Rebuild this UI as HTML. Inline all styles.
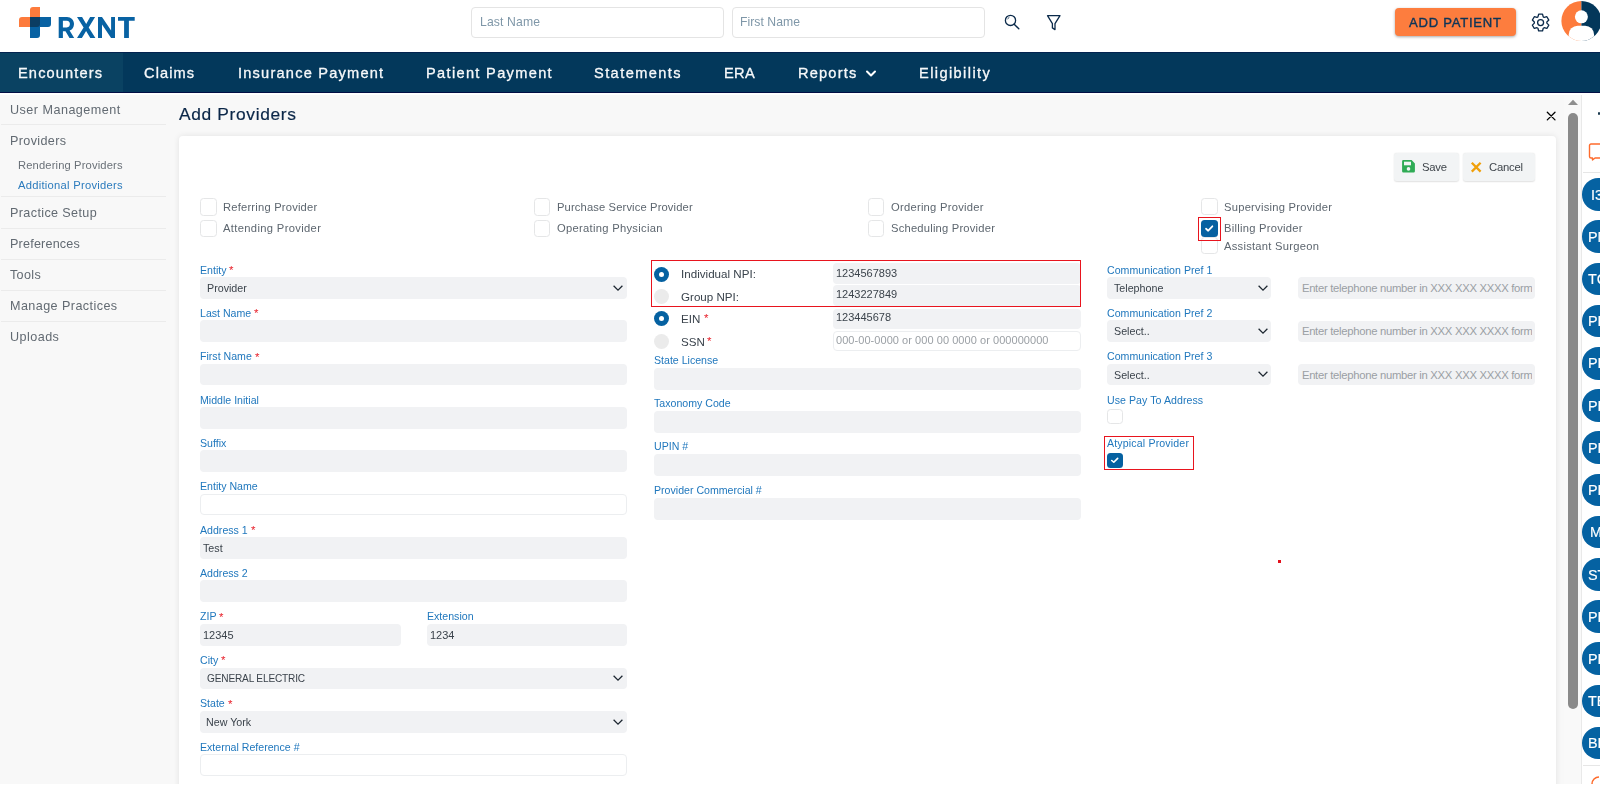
<!DOCTYPE html>
<html><head><meta charset="utf-8"><style>
html,body{margin:0;padding:0;}
body{width:1600px;height:798px;overflow:hidden;position:relative;background:#fff;font-family:"Liberation Sans",sans-serif;}
.a{position:absolute;}
.t{position:absolute;white-space:nowrap;will-change:transform;}
</style></head><body>
<svg class="a" style="left:0;top:0" width="160" height="52" viewBox="0 0 160 52">
<path d="M33 7 H40 V27 H19 V20 a3 3 0 0 1 3-3 H30 V10 a3 3 0 0 1 3-3 Z" fill="#fd7b3c"/>
<path d="M30 17 H51 V24 a3 3 0 0 1 -3 3 H40 V35 a3 3 0 0 1 -3 3 H30 Z" fill="#0862a3"/>
<path d="M30 17 H40 V24 a3 3 0 0 1 -3 3 H30 Z" fill="#0b3d63"/>
<g fill="#0862a3">
<path fill-rule="evenodd" d="M58.7 17 H67 C71 17 74 19.9 74 24 C74 27.3 72.1 29.7 69.6 30.6 L74.2 38 H69.5 L65.5 31.2 H62.9 V38 H58.7 Z M62.9 20.8 H66.8 C68.8 20.8 69.9 22.1 69.9 24.1 C69.9 26.1 68.8 27.4 66.8 27.4 H62.9 Z"/>
<path d="M77 17 H82.1 L86.2 23.9 L90.1 17 H95.1 L88.7 27.5 L95.4 38 H90.3 L86.1 31.1 L81.9 38 H77 L83.6 27.5 Z"/>
<path d="M98 17 H102 L111.1 30.6 V17 H115 V38 H111.1 L102 24.4 V38 H98 Z"/>
<path d="M118 17 H134.7 V20.8 H128.9 V38 H124.1 V20.8 H118 Z"/>
</g>
</svg>
<div class="a" style="left:471px;top:7px;width:253px;height:31px;background:#fff;border:1px solid #e4e4e4;border-radius:4px;box-sizing:border-box;"></div>
<div class="a" style="left:732px;top:7px;width:253px;height:31px;background:#fff;border:1px solid #e4e4e4;border-radius:4px;box-sizing:border-box;"></div>
<div class="t " style="left:479.50px;top:16.20px;font-size:12.20px;line-height:12.20px;color:#7f97a8;letter-spacing:0.126px;">Last Name</div>
<div class="t " style="left:739.80px;top:16.20px;font-size:12.20px;line-height:12.20px;color:#7f97a8;letter-spacing:0.039px;">First Name</div>
<svg class="a" style="left:1000px;top:10px" width="24" height="24" viewBox="0 0 24 24">
<circle cx="10.5" cy="10.4" r="5.1" fill="none" stroke="#0b2a4a" stroke-width="1.3"/>
<path d="M14.2 14.2 L18.8 18.8" stroke="#0b2a4a" stroke-width="1.4" stroke-linecap="round"/>
<path d="M7.8 8.7 L9.1 7.5" stroke="#0b2a4a" stroke-width="0.9" stroke-linecap="round"/>
</svg>
<svg class="a" style="left:1044px;top:12px" width="20" height="20" viewBox="0 0 20 20">
<path d="M3.5 3.7 H16 L11 11.6 V17.6 L8.4 15.9 V11.6 Z" fill="none" stroke="#0b2a4a" stroke-width="1.3" stroke-linejoin="round"/>
</svg>
<div class="a" style="left:1395px;top:8px;width:121px;height:28px;background:#fd7d3e;border-radius:4px;box-shadow:0 1px 3px rgba(0,0,0,.35);"></div>
<div class="t " style="left:1409.00px;top:16.25px;font-size:13.10px;line-height:13.10px;color:#0d3558;letter-spacing:0.733px;-webkit-text-stroke:0.4px #0d3558;">ADD PATIENT</div>
<svg class="a" style="left:1529px;top:10.6px" width="23.2" height="23.2" viewBox="0 0 24 24">
<path fill="none" stroke="#0b2a4a" stroke-width="1.35" stroke-linejoin="round" d="M9.25 6.11 L10.00 3.33 L14.00 3.33 L14.75 6.11 L15.73 6.68 L18.51 5.93 L20.51 9.40 L18.48 11.43 L18.48 12.57 L20.51 14.60 L18.51 18.07 L15.73 17.32 L14.75 17.89 L14.00 20.67 L10.00 20.67 L9.25 17.89 L8.27 17.32 L5.49 18.07 L3.49 14.60 L5.52 12.57 L5.52 11.43 L3.49 9.40 L5.49 5.93 L8.27 6.68 Z"/>
<circle cx="12" cy="12" r="3.1" fill="none" stroke="#0b2a4a" stroke-width="1.35"/>
</svg>
<svg class="a" style="left:1560px;top:0" width="40" height="44" viewBox="1560 0 40 44">
<defs><clipPath id="av"><circle cx="1581.4" cy="20.9" r="20"/></clipPath></defs>
<g clip-path="url(#av)">
<rect x="1561" y="0" width="20.4" height="42" fill="#fd7b3c"/>
<rect x="1581.4" y="0" width="21" height="42" fill="#03375a"/>
<rect x="1568.7" y="25.7" width="25.4" height="24" rx="9" fill="#fff"/>
</g>
<circle cx="1581.4" cy="16.8" r="6.5" fill="#fff"/>
</svg>
<div class="a" style="left:0px;top:52px;width:1600px;height:41px;background:#03385b;"></div>
<div class="a" style="left:0px;top:52px;width:123px;height:41px;background:#0a4262;"></div>
<div class="a" style="left:0px;top:92px;width:1600px;height:1px;background:#020f45;"></div>
<div class="a" style="left:0px;top:52px;width:1600px;height:1px;background:#021d4c;opacity:.8;"></div>
<div class="t " style="left:17.50px;top:66.00px;font-size:14.60px;line-height:14.60px;color:#f4f6f8;letter-spacing:1.138px;-webkit-text-stroke:0.3px #fff;">Encounters</div>
<div class="t " style="left:144.40px;top:66.00px;font-size:14.60px;line-height:14.60px;color:#f4f6f8;letter-spacing:1.097px;-webkit-text-stroke:0.3px #fff;">Claims</div>
<div class="t " style="left:237.80px;top:66.00px;font-size:14.60px;line-height:14.60px;color:#f4f6f8;letter-spacing:1.213px;-webkit-text-stroke:0.3px #fff;">Insurance Payment</div>
<div class="t " style="left:426.30px;top:66.00px;font-size:14.60px;line-height:14.60px;color:#f4f6f8;letter-spacing:1.327px;-webkit-text-stroke:0.3px #fff;">Patient Payment</div>
<div class="t " style="left:594.40px;top:66.00px;font-size:14.60px;line-height:14.60px;color:#f4f6f8;letter-spacing:1.417px;-webkit-text-stroke:0.3px #fff;">Statements</div>
<div class="t " style="left:723.80px;top:66.00px;font-size:14.60px;line-height:14.60px;color:#f4f6f8;letter-spacing:0.339px;-webkit-text-stroke:0.3px #fff;">ERA</div>
<div class="t " style="left:797.80px;top:66.00px;font-size:14.60px;line-height:14.60px;color:#f4f6f8;letter-spacing:1.196px;-webkit-text-stroke:0.3px #fff;">Reports</div>
<div class="t " style="left:918.60px;top:66.00px;font-size:14.60px;line-height:14.60px;color:#f4f6f8;letter-spacing:1.400px;-webkit-text-stroke:0.3px #fff;">Eligibility</div>
<svg class="a" style="left:864px;top:67.5px" width="14" height="12" viewBox="0 0 14 12"><path d="M3 3.5 L7 7.5 L11 3.5" fill="none" stroke="#fff" stroke-width="2" stroke-linecap="round" stroke-linejoin="round"/></svg>
<div class="a" style="left:0px;top:95px;width:1564px;height:689px;background:#f8f8f8;"></div>
<div class="a" style="left:1px;top:124px;width:165px;height:1px;background:#ebebeb;"></div>
<div class="a" style="left:1px;top:196px;width:165px;height:1px;background:#ebebeb;"></div>
<div class="a" style="left:1px;top:228px;width:165px;height:1px;background:#ebebeb;"></div>
<div class="a" style="left:1px;top:259px;width:165px;height:1px;background:#ebebeb;"></div>
<div class="a" style="left:1px;top:290px;width:165px;height:1px;background:#ebebeb;"></div>
<div class="a" style="left:1px;top:321px;width:165px;height:1px;background:#ebebeb;"></div>
<div class="t " style="left:9.50px;top:104.00px;font-size:12.60px;line-height:12.60px;color:#626a72;letter-spacing:0.475px;">User Management</div>
<div class="t " style="left:9.50px;top:135.00px;font-size:12.60px;line-height:12.60px;color:#626a72;letter-spacing:0.360px;">Providers</div>
<div class="t " style="left:9.70px;top:207.00px;font-size:12.60px;line-height:12.60px;color:#626a72;letter-spacing:0.373px;">Practice Setup</div>
<div class="t " style="left:9.70px;top:238.00px;font-size:12.60px;line-height:12.60px;color:#626a72;letter-spacing:0.196px;">Preferences</div>
<div class="t " style="left:9.70px;top:269.00px;font-size:12.60px;line-height:12.60px;color:#626a72;letter-spacing:0.321px;">Tools</div>
<div class="t " style="left:9.70px;top:300.00px;font-size:12.60px;line-height:12.60px;color:#626a72;letter-spacing:0.423px;">Manage Practices</div>
<div class="t " style="left:9.70px;top:331.00px;font-size:12.60px;line-height:12.60px;color:#626a72;letter-spacing:0.445px;">Uploads</div>
<div class="t " style="left:18.30px;top:159.70px;font-size:11.20px;line-height:11.20px;color:#6a7178;letter-spacing:0.139px;">Rendering Providers</div>
<div class="t " style="left:18.30px;top:179.70px;font-size:11.20px;line-height:11.20px;color:#2b7bbd;letter-spacing:0.268px;">Additional Providers</div>
<div class="t " style="left:179.00px;top:105.60px;font-size:17.40px;line-height:17.40px;color:#0b2748;letter-spacing:0.643px;-webkit-text-stroke:0.2px #0b2748;">Add Providers</div>
<svg class="a" style="left:1545px;top:110px" width="12" height="12" viewBox="0 0 12 12"><path d="M2.3 2.2 L10 9.9 M10 2.2 L2.3 9.9" stroke="#000" stroke-width="1.3" stroke-linecap="round"/></svg>
<div class="a" style="left:179px;top:136px;width:1377px;height:700px;background:#fff;border-radius:4px;box-shadow:0 0 6px rgba(0,0,0,.09);"></div>
<div class="a" style="left:1394px;top:153.4px;width:65px;height:27.5px;background:#f2f4f5;border-radius:3px;box-shadow:0 0.5px 1.5px rgba(0,0,0,.12);"></div>
<div class="a" style="left:1463px;top:153.4px;width:72px;height:27.5px;background:#f2f4f5;border-radius:3px;box-shadow:0 0.5px 1.5px rgba(0,0,0,.12);"></div>
<svg class="a" style="left:1401px;top:159.4px" width="15" height="15" viewBox="0 0 15 15"><path d="M1.1 2.3 a1.2 1.2 0 0 1 1.2-1.2 H10.6 L13.9 4.4 V12.2 a1.2 1.2 0 0 1 -1.2 1.2 H2.3 a1.2 1.2 0 0 1 -1.2-1.2 Z" fill="#2fab55"/><rect x="3" y="2.7" width="7" height="3.6" fill="#f2f4f5"/><circle cx="7.5" cy="9.9" r="1.8" fill="#f2f4f5"/></svg>
<svg class="a" style="left:1469px;top:160px" width="15" height="15" viewBox="0 0 15 15"><path d="M2.8 2.8 L11.6 11.6 M11.6 2.8 L2.8 11.6" stroke="#f0a00a" stroke-width="2.3"/></svg>
<div class="t " style="left:1422.00px;top:161.65px;font-size:11.30px;line-height:11.30px;color:#3f454b;letter-spacing:-0.252px;">Save</div>
<div class="t " style="left:1489.00px;top:161.65px;font-size:11.30px;line-height:11.30px;color:#3f454b;letter-spacing:-0.235px;">Cancel</div>
<div class="a" style="left:1564px;top:95px;width:17px;height:689px;background:#f9f9f9;"></div>
<svg class="a" style="left:1564px;top:96px" width="17" height="12" viewBox="0 0 17 12"><path d="M4 9 L9 3.7 L14 9 Z" fill="#8f8f8f"/></svg>
<div class="a" style="left:1568px;top:113px;width:10px;height:596px;background:#8a8a8a;border-radius:5px;"></div>
<div class="a" style="left:1581px;top:95px;width:19px;height:689px;background:#fff;border-left:1px solid #e9e9e9;box-sizing:border-box;"></div>
<div class="a" style="left:1598px;top:112px;width:2px;height:3px;background:#1b3a4f;border-radius:1px;"></div>
<svg class="a" style="left:1581px;top:140px" width="19" height="24" viewBox="0 0 19 24"><path d="M10 4 H19 M10 4 a1.5 1.5 0 0 0 -1.5 1.5 V16.5 a1.5 1.5 0 0 0 1.5 1.5 H11.5 V20 L14 18 H19" fill="none" stroke="#fe6b2c" stroke-width="1.4" stroke-linejoin="round"/></svg>
<div class="a" style="left:1583px;top:172px;width:17px;height:1px;background:#e6e6e6;"></div>
<div class="a" style="left:1581.8px;top:178.2px;width:34px;height:32.6px;background:#0562a2;border-radius:16.3px;"></div>
<div class="t " style="left:1591.20px;top:188.10px;font-size:14.40px;line-height:14.40px;color:#fff;letter-spacing:0.000px;-webkit-text-stroke:0.15px #fff;">I3</div>
<div class="a" style="left:1581.8px;top:220.4px;width:34px;height:32.6px;background:#0562a2;border-radius:16.3px;"></div>
<div class="t " style="left:1587.80px;top:230.10px;font-size:14.40px;line-height:14.40px;color:#fff;letter-spacing:0.000px;-webkit-text-stroke:0.15px #fff;">PN</div>
<div class="a" style="left:1581.8px;top:262.6px;width:34px;height:32.6px;background:#0562a2;border-radius:16.3px;"></div>
<div class="t " style="left:1587.80px;top:272.10px;font-size:14.40px;line-height:14.40px;color:#fff;letter-spacing:0.000px;-webkit-text-stroke:0.15px #fff;">TC</div>
<div class="a" style="left:1581.8px;top:304.8px;width:34px;height:32.6px;background:#0562a2;border-radius:16.3px;"></div>
<div class="t " style="left:1587.80px;top:314.10px;font-size:14.40px;line-height:14.40px;color:#fff;letter-spacing:0.000px;-webkit-text-stroke:0.15px #fff;">PR</div>
<div class="a" style="left:1581.8px;top:347.0px;width:34px;height:32.6px;background:#0562a2;border-radius:16.3px;"></div>
<div class="t " style="left:1587.80px;top:356.10px;font-size:14.40px;line-height:14.40px;color:#fff;letter-spacing:0.000px;-webkit-text-stroke:0.15px #fff;">PR</div>
<div class="a" style="left:1581.8px;top:389.2px;width:34px;height:32.6px;background:#0562a2;border-radius:16.3px;"></div>
<div class="t " style="left:1587.80px;top:399.10px;font-size:14.40px;line-height:14.40px;color:#fff;letter-spacing:0.000px;-webkit-text-stroke:0.15px #fff;">PR</div>
<div class="a" style="left:1581.8px;top:431.4px;width:34px;height:32.6px;background:#0562a2;border-radius:16.3px;"></div>
<div class="t " style="left:1587.80px;top:441.10px;font-size:14.40px;line-height:14.40px;color:#fff;letter-spacing:0.000px;-webkit-text-stroke:0.15px #fff;">PR</div>
<div class="a" style="left:1581.8px;top:473.6px;width:34px;height:32.6px;background:#0562a2;border-radius:16.3px;"></div>
<div class="t " style="left:1587.80px;top:483.10px;font-size:14.40px;line-height:14.40px;color:#fff;letter-spacing:0.000px;-webkit-text-stroke:0.15px #fff;">PR</div>
<div class="a" style="left:1581.8px;top:515.8px;width:34px;height:32.6px;background:#0562a2;border-radius:16.3px;"></div>
<div class="t " style="left:1589.50px;top:525.10px;font-size:14.40px;line-height:14.40px;color:#fff;letter-spacing:0.000px;-webkit-text-stroke:0.15px #fff;">M</div>
<div class="a" style="left:1581.8px;top:558.0px;width:34px;height:32.6px;background:#0562a2;border-radius:16.3px;"></div>
<div class="t " style="left:1587.80px;top:568.10px;font-size:14.40px;line-height:14.40px;color:#fff;letter-spacing:0.000px;-webkit-text-stroke:0.15px #fff;">ST</div>
<div class="a" style="left:1581.8px;top:600.2px;width:34px;height:32.6px;background:#0562a2;border-radius:16.3px;"></div>
<div class="t " style="left:1587.80px;top:610.10px;font-size:14.40px;line-height:14.40px;color:#fff;letter-spacing:0.000px;-webkit-text-stroke:0.15px #fff;">PR</div>
<div class="a" style="left:1581.8px;top:642.4px;width:34px;height:32.6px;background:#0562a2;border-radius:16.3px;"></div>
<div class="t " style="left:1587.80px;top:652.10px;font-size:14.40px;line-height:14.40px;color:#fff;letter-spacing:0.000px;-webkit-text-stroke:0.15px #fff;">PR</div>
<div class="a" style="left:1581.8px;top:684.6px;width:34px;height:32.6px;background:#0562a2;border-radius:16.3px;"></div>
<div class="t " style="left:1587.80px;top:694.10px;font-size:14.40px;line-height:14.40px;color:#fff;letter-spacing:0.000px;-webkit-text-stroke:0.15px #fff;">TE</div>
<div class="a" style="left:1581.8px;top:726.8px;width:34px;height:32.6px;background:#0562a2;border-radius:16.3px;"></div>
<div class="t " style="left:1587.80px;top:736.10px;font-size:14.40px;line-height:14.40px;color:#fff;letter-spacing:0.000px;-webkit-text-stroke:0.15px #fff;">BE</div>
<div class="a" style="left:1583px;top:765px;width:17px;height:1px;background:#e6e6e6;"></div>
<svg class="a" style="left:1590px;top:774px" width="10" height="10" viewBox="0 0 10 10"><path d="M2 10 A7 7 0 0 1 9 3" fill="none" stroke="#fe6b2c" stroke-width="1.5"/></svg>
<div class="a" style="left:0px;top:784px;width:1600px;height:14px;background:#fff;"></div>
<div class="a" style="left:200.3px;top:198.2px;width:16.5px;height:17.4px;border:1px solid #e5e6e7;border-radius:3.5px;box-sizing:border-box;background:#fff;"></div>
<div class="t " style="left:223.30px;top:201.70px;font-size:11.20px;line-height:11.20px;color:#5d666f;letter-spacing:0.201px;">Referring Provider</div>
<div class="a" style="left:200.3px;top:220.1px;width:16.5px;height:16.7px;border:1px solid #e5e6e7;border-radius:3.5px;box-sizing:border-box;background:#fff;"></div>
<div class="t " style="left:223.30px;top:222.70px;font-size:11.20px;line-height:11.20px;color:#5d666f;letter-spacing:0.344px;">Attending Provider</div>
<div class="a" style="left:533.7px;top:198.2px;width:16.5px;height:17.4px;border:1px solid #e5e6e7;border-radius:3.5px;box-sizing:border-box;background:#fff;"></div>
<div class="t " style="left:556.90px;top:201.70px;font-size:11.20px;line-height:11.20px;color:#5d666f;letter-spacing:0.134px;">Purchase Service Provider</div>
<div class="a" style="left:533.7px;top:220.1px;width:16.5px;height:16.7px;border:1px solid #e5e6e7;border-radius:3.5px;box-sizing:border-box;background:#fff;"></div>
<div class="t " style="left:556.90px;top:222.70px;font-size:11.20px;line-height:11.20px;color:#5d666f;letter-spacing:0.293px;">Operating Physician</div>
<div class="a" style="left:867.7px;top:198.2px;width:16.5px;height:17.4px;border:1px solid #e5e6e7;border-radius:3.5px;box-sizing:border-box;background:#fff;"></div>
<div class="t " style="left:890.60px;top:201.70px;font-size:11.20px;line-height:11.20px;color:#5d666f;letter-spacing:0.257px;">Ordering Provider</div>
<div class="a" style="left:867.7px;top:220.1px;width:16.5px;height:16.7px;border:1px solid #e5e6e7;border-radius:3.5px;box-sizing:border-box;background:#fff;"></div>
<div class="t " style="left:890.60px;top:222.70px;font-size:11.20px;line-height:11.20px;color:#5d666f;letter-spacing:0.209px;">Scheduling Provider</div>
<div class="a" style="left:1201.2px;top:198.3px;width:16.5px;height:17px;border:1px solid #e5e6e7;border-radius:3.5px;box-sizing:border-box;background:#fff;"></div>
<div class="t " style="left:1224.00px;top:201.70px;font-size:11.20px;line-height:11.20px;color:#5d666f;letter-spacing:0.245px;">Supervising Provider</div>
<div class="a" style="left:1201.2px;top:237px;width:16.5px;height:17px;border:1px solid #e5e6e7;border-radius:3.5px;box-sizing:border-box;background:#fff;"></div>
<div class="a" style="left:1201.2px;top:220px;width:16.5px;height:17px;background:#0561a1;border-radius:3.5px;"></div>
<svg class="a" style="left:1201.2px;top:220px" width="16.5" height="17" viewBox="0 0 16 16" preserveAspectRatio="none"><path d="M4.9 8.2 L7 10.1 L11 5.9" fill="none" stroke="#fff" stroke-width="1.7" stroke-linecap="round" stroke-linejoin="round"/></svg>
<div class="t " style="left:1224.00px;top:222.70px;font-size:11.20px;line-height:11.20px;color:#5d666f;letter-spacing:0.253px;">Billing Provider</div>
<div class="t " style="left:1224.00px;top:240.70px;font-size:11.20px;line-height:11.20px;color:#5d666f;letter-spacing:0.256px;">Assistant Surgeon</div>
<div class="a" style="left:1198px;top:217.2px;width:23px;height:23.6px;border:1.8px solid #e8141e;box-sizing:border-box;"></div>
<div class="t " style="left:199.70px;top:265.00px;font-size:10.60px;line-height:10.60px;color:#1f77bd;letter-spacing:0.000px;">Entity</div>
<div class="t " style="left:229.41px;top:264.55px;font-size:11.50px;line-height:11.50px;color:#e8212b;letter-spacing:0.000px;">*</div>
<div class="a" style="left:199.7px;top:277.09999999999997px;width:427px;height:21.6px;background:#f1f2f4;border-radius:4px;"></div>
<div class="t " style="left:206.60px;top:282.95px;font-size:10.70px;line-height:10.70px;color:#3b434b;letter-spacing:0.000px;">Provider</div>
<svg class="a" style="left:613.0px;top:283.9px" width="10" height="8" viewBox="0 0 10 8"><path d="M0.6 1.7 L5 6.1 L9.4 1.7" fill="none" stroke="#1c2630" stroke-width="1.25"/></svg>
<div class="t " style="left:199.70px;top:308.00px;font-size:10.60px;line-height:10.60px;color:#1f77bd;letter-spacing:0.000px;">Last Name</div>
<div class="t " style="left:254.16px;top:307.55px;font-size:11.50px;line-height:11.50px;color:#e8212b;letter-spacing:0.000px;">*</div>
<div class="a" style="left:199.7px;top:320.29999999999995px;width:427px;height:21.6px;background:#f1f2f4;border-radius:4px;"></div>
<div class="t " style="left:199.70px;top:351.00px;font-size:10.60px;line-height:10.60px;color:#1f77bd;letter-spacing:0.000px;">First Name</div>
<div class="t " style="left:254.73px;top:351.55px;font-size:11.50px;line-height:11.50px;color:#e8212b;letter-spacing:0.000px;">*</div>
<div class="a" style="left:199.7px;top:363.7px;width:427px;height:21.6px;background:#f1f2f4;border-radius:4px;"></div>
<div class="t " style="left:199.70px;top:395.00px;font-size:10.60px;line-height:10.60px;color:#1f77bd;letter-spacing:0.000px;">Middle Initial</div>
<div class="a" style="left:199.7px;top:407.09999999999997px;width:427px;height:21.6px;background:#f1f2f4;border-radius:4px;"></div>
<div class="t " style="left:199.70px;top:438.00px;font-size:10.60px;line-height:10.60px;color:#1f77bd;letter-spacing:0.000px;">Suffix</div>
<div class="a" style="left:199.7px;top:450.4px;width:427px;height:21.6px;background:#f1f2f4;border-radius:4px;"></div>
<div class="t " style="left:199.70px;top:481.00px;font-size:10.60px;line-height:10.60px;color:#1f77bd;letter-spacing:0.000px;">Entity Name</div>
<div class="a" style="left:199.7px;top:493.79999999999995px;width:427px;height:21.6px;background:#fff;border:1px solid #eceef0;border-radius:4px;box-sizing:border-box;"></div>
<div class="t " style="left:199.70px;top:525.00px;font-size:10.60px;line-height:10.60px;color:#1f77bd;letter-spacing:0.000px;">Address 1</div>
<div class="t " style="left:250.63px;top:524.55px;font-size:11.50px;line-height:11.50px;color:#e8212b;letter-spacing:0.000px;">*</div>
<div class="a" style="left:199.7px;top:537.1999999999999px;width:427px;height:21.6px;background:#f1f2f4;border-radius:4px;"></div>
<div class="t " style="left:202.90px;top:542.95px;font-size:10.70px;line-height:10.70px;color:#3b434b;letter-spacing:0.000px;">Test</div>
<div class="t " style="left:199.70px;top:568.00px;font-size:10.60px;line-height:10.60px;color:#1f77bd;letter-spacing:0.000px;">Address 2</div>
<div class="a" style="left:199.7px;top:580.4px;width:427px;height:21.6px;background:#f1f2f4;border-radius:4px;"></div>
<div class="t " style="left:199.70px;top:611.00px;font-size:10.60px;line-height:10.60px;color:#1f77bd;letter-spacing:0.000px;">ZIP</div>
<div class="t " style="left:219.39px;top:611.55px;font-size:11.50px;line-height:11.50px;color:#e8212b;letter-spacing:0.000px;">*</div>
<div class="a" style="left:199.7px;top:624.2px;width:201.2px;height:21.6px;background:#f1f2f4;border-radius:4px;"></div>
<div class="t " style="left:202.90px;top:629.80px;font-size:11.00px;line-height:11.00px;color:#3b434b;letter-spacing:0.000px;">12345</div>
<div class="t " style="left:427.00px;top:611.00px;font-size:10.60px;line-height:10.60px;color:#1f77bd;letter-spacing:0.000px;">Extension</div>
<div class="a" style="left:426.8px;top:624.2px;width:200px;height:21.6px;background:#f1f2f4;border-radius:4px;"></div>
<div class="t " style="left:429.80px;top:629.80px;font-size:11.00px;line-height:11.00px;color:#3b434b;letter-spacing:0.000px;">1234</div>
<div class="t " style="left:199.70px;top:655.00px;font-size:10.60px;line-height:10.60px;color:#1f77bd;letter-spacing:0.000px;">City</div>
<div class="t " style="left:221.16px;top:654.55px;font-size:11.50px;line-height:11.50px;color:#e8212b;letter-spacing:0.000px;">*</div>
<div class="a" style="left:199.7px;top:667.5px;width:427px;height:21.6px;background:#f1f2f4;border-radius:4px;"></div>
<svg class="a" style="left:613.0px;top:674.3px" width="10" height="8" viewBox="0 0 10 8"><path d="M0.6 1.7 L5 6.1 L9.4 1.7" fill="none" stroke="#1c2630" stroke-width="1.25"/></svg>
<div class="t " style="left:207.00px;top:673.75px;font-size:10.10px;line-height:10.10px;color:#3b434b;letter-spacing:-0.164px;">GENERAL ELECTRIC</div>
<div class="t " style="left:199.70px;top:698.00px;font-size:10.60px;line-height:10.60px;color:#1f77bd;letter-spacing:0.000px;">State</div>
<div class="t " style="left:227.65px;top:698.55px;font-size:11.50px;line-height:11.50px;color:#e8212b;letter-spacing:0.000px;">*</div>
<div class="a" style="left:199.7px;top:711.2px;width:427px;height:21.6px;background:#f1f2f4;border-radius:4px;"></div>
<div class="t " style="left:206.20px;top:716.95px;font-size:10.70px;line-height:10.70px;color:#3b434b;letter-spacing:0.000px;">New York</div>
<svg class="a" style="left:613.0px;top:718.0px" width="10" height="8" viewBox="0 0 10 8"><path d="M0.6 1.7 L5 6.1 L9.4 1.7" fill="none" stroke="#1c2630" stroke-width="1.25"/></svg>
<div class="t " style="left:199.70px;top:742.00px;font-size:10.60px;line-height:10.60px;color:#1f77bd;letter-spacing:0.000px;">External Reference #</div>
<div class="a" style="left:199.7px;top:754.3px;width:427px;height:21.6px;background:#fff;border:1px solid #eceef0;border-radius:4px;box-sizing:border-box;"></div>
<div class="a" style="left:654.0px;top:266.6px;width:15px;height:15px;border-radius:50%;background:#0561a1;"></div>
<div class="a" style="left:658.9px;top:271.5px;width:5.2px;height:5.2px;border-radius:50%;background:#fff;"></div>
<div class="a" style="left:654.0px;top:288.8px;width:15px;height:15px;border-radius:50%;background:#ebebeb;"></div>
<div class="a" style="left:654.0px;top:311.4px;width:15px;height:15px;border-radius:50%;background:#0561a1;"></div>
<div class="a" style="left:658.9px;top:316.3px;width:5.2px;height:5.2px;border-radius:50%;background:#fff;"></div>
<div class="a" style="left:654.0px;top:333.9px;width:15px;height:15px;border-radius:50%;background:#ebebeb;"></div>
<div class="t " style="left:680.60px;top:267.50px;font-size:11.60px;line-height:11.60px;color:#3a434c;letter-spacing:0.015px;">Individual NPI:</div>
<div class="t " style="left:680.60px;top:290.50px;font-size:11.60px;line-height:11.60px;color:#3a434c;letter-spacing:0.000px;">Group NPI:</div>
<div class="t " style="left:680.60px;top:312.50px;font-size:11.60px;line-height:11.60px;color:#3a434c;letter-spacing:0.000px;">EIN</div>
<div class="t " style="left:703.50px;top:312.55px;font-size:11.50px;line-height:11.50px;color:#e8212b;letter-spacing:0.000px;">*</div>
<div class="t " style="left:680.60px;top:335.50px;font-size:11.60px;line-height:11.60px;color:#3a434c;letter-spacing:0.000px;">SSN</div>
<div class="t " style="left:707.00px;top:335.55px;font-size:11.50px;line-height:11.50px;color:#e8212b;letter-spacing:0.000px;">*</div>
<div class="a" style="left:832.5px;top:263px;width:248.5px;height:21px;background:#f1f2f4;border-radius:4px;"></div>
<div class="t " style="left:835.90px;top:267.80px;font-size:11.00px;line-height:11.00px;color:#3b434b;letter-spacing:0.000px;">1234567893</div>
<div class="a" style="left:832.5px;top:285px;width:248.5px;height:20.5px;background:#f1f2f4;border-radius:4px;"></div>
<div class="t " style="left:835.90px;top:288.80px;font-size:11.00px;line-height:11.00px;color:#3b434b;letter-spacing:0.000px;">1243227849</div>
<div class="a" style="left:832.5px;top:308.9px;width:248.5px;height:20.5px;background:#f1f2f4;border-radius:4px;"></div>
<div class="t " style="left:835.90px;top:311.80px;font-size:11.00px;line-height:11.00px;color:#3b434b;letter-spacing:0.000px;">123445678</div>
<div class="a" style="left:832.5px;top:330.5px;width:248.5px;height:20px;background:#fff;border:1px solid #eceef0;border-radius:4px;box-sizing:border-box;"></div>
<div class="t " style="left:835.90px;top:334.80px;font-size:11.00px;line-height:11.00px;color:#9a9fa4;letter-spacing:0.055px;">000-00-0000 or 000 00 0000 or 000000000</div>
<div class="a" style="left:650.8px;top:260.3px;width:430.2px;height:47px;border:1.8px solid #e8141e;box-sizing:border-box;"></div>
<div class="t " style="left:653.60px;top:355.00px;font-size:10.60px;line-height:10.60px;color:#1f77bd;letter-spacing:0.000px;">State License</div>
<div class="a" style="left:653.6px;top:367.5px;width:427.4px;height:22px;background:#f1f2f4;border-radius:4px;"></div>
<div class="t " style="left:653.60px;top:398.00px;font-size:10.60px;line-height:10.60px;color:#1f77bd;letter-spacing:0.000px;">Taxonomy Code</div>
<div class="a" style="left:653.6px;top:411px;width:427.4px;height:22px;background:#f1f2f4;border-radius:4px;"></div>
<div class="t " style="left:653.60px;top:441.00px;font-size:10.60px;line-height:10.60px;color:#1f77bd;letter-spacing:0.000px;">UPIN #</div>
<div class="a" style="left:653.6px;top:454.2px;width:427.4px;height:22px;background:#f1f2f4;border-radius:4px;"></div>
<div class="t " style="left:653.60px;top:485.00px;font-size:10.60px;line-height:10.60px;color:#1f77bd;letter-spacing:0.000px;">Provider Commercial #</div>
<div class="a" style="left:653.6px;top:497.6px;width:427.4px;height:22px;background:#f1f2f4;border-radius:4px;"></div>
<div class="t " style="left:1107.20px;top:265.00px;font-size:10.60px;line-height:10.60px;color:#1f77bd;letter-spacing:0.028px;">Communication Pref 1</div>
<div class="a" style="left:1106.9px;top:277.2px;width:164.5px;height:21.6px;background:#f1f2f4;border-radius:4px;"></div>
<div class="t " style="left:1114.30px;top:282.95px;font-size:10.70px;line-height:10.70px;color:#3b434b;letter-spacing:0.000px;">Telephone</div>
<svg class="a" style="left:1257.7px;top:284.0px" width="10" height="8" viewBox="0 0 10 8"><path d="M0.6 1.7 L5 6.1 L9.4 1.7" fill="none" stroke="#1c2630" stroke-width="1.25"/></svg>
<div class="a" style="left:1298.4px;top:277.40000000000003px;width:236.4px;height:21.2px;background:#f1f2f4;border-radius:4px;"></div>
<div class="a" style="left:1301.9px;top:277.4px;width:229.7px;height:21px;overflow:hidden;"><div style="position:relative;left:0;">
<div style="position:absolute;left:0;top:5.83px;font-size:11.3px;line-height:11.3px;color:#9a9fa4;white-space:nowrap;letter-spacing:-0.3px">Enter telephone number in XXX XXX XXXX format</div></div></div>
<div class="t " style="left:1107.20px;top:308.00px;font-size:10.60px;line-height:10.60px;color:#1f77bd;letter-spacing:0.028px;">Communication Pref 2</div>
<div class="a" style="left:1106.9px;top:320.4px;width:164.5px;height:21.6px;background:#f1f2f4;border-radius:4px;"></div>
<div class="t " style="left:1114.30px;top:325.95px;font-size:10.70px;line-height:10.70px;color:#3b434b;letter-spacing:0.000px;">Select..</div>
<svg class="a" style="left:1257.7px;top:327.2px" width="10" height="8" viewBox="0 0 10 8"><path d="M0.6 1.7 L5 6.1 L9.4 1.7" fill="none" stroke="#1c2630" stroke-width="1.25"/></svg>
<div class="a" style="left:1298.4px;top:320.6px;width:236.4px;height:21.2px;background:#f1f2f4;border-radius:4px;"></div>
<div class="a" style="left:1301.9px;top:320.6px;width:229.7px;height:21px;overflow:hidden;"><div style="position:relative;left:0;">
<div style="position:absolute;left:0;top:5.83px;font-size:11.3px;line-height:11.3px;color:#9a9fa4;white-space:nowrap;letter-spacing:-0.3px">Enter telephone number in XXX XXX XXXX format</div></div></div>
<div class="t " style="left:1107.20px;top:351.00px;font-size:10.60px;line-height:10.60px;color:#1f77bd;letter-spacing:0.028px;">Communication Pref 3</div>
<div class="a" style="left:1106.9px;top:363.6px;width:164.5px;height:21.6px;background:#f1f2f4;border-radius:4px;"></div>
<div class="t " style="left:1114.30px;top:369.95px;font-size:10.70px;line-height:10.70px;color:#3b434b;letter-spacing:0.000px;">Select..</div>
<svg class="a" style="left:1257.7px;top:370.4px" width="10" height="8" viewBox="0 0 10 8"><path d="M0.6 1.7 L5 6.1 L9.4 1.7" fill="none" stroke="#1c2630" stroke-width="1.25"/></svg>
<div class="a" style="left:1298.4px;top:363.80000000000007px;width:236.4px;height:21.2px;background:#f1f2f4;border-radius:4px;"></div>
<div class="a" style="left:1301.9px;top:363.8px;width:229.7px;height:21px;overflow:hidden;"><div style="position:relative;left:0;">
<div style="position:absolute;left:0;top:5.83px;font-size:11.3px;line-height:11.3px;color:#9a9fa4;white-space:nowrap;letter-spacing:-0.3px">Enter telephone number in XXX XXX XXXX format</div></div></div>
<div class="t " style="left:1107.00px;top:395.00px;font-size:10.60px;line-height:10.60px;color:#1f77bd;letter-spacing:0.050px;">Use Pay To Address</div>
<div class="a" style="left:1107.0px;top:409.4px;width:15.5px;height:15px;border:1px solid #e5e6e7;border-radius:3.5px;box-sizing:border-box;background:#fff;"></div>
<div class="t " style="left:1107.00px;top:438.00px;font-size:10.60px;line-height:10.60px;color:#1f77bd;letter-spacing:0.154px;">Atypical Provider</div>
<div class="a" style="left:1107.0px;top:453.1px;width:15.5px;height:14.6px;background:#0561a1;border-radius:3.5px;"></div>
<svg class="a" style="left:1107.0px;top:453.1px" width="15.5" height="14.6" viewBox="0 0 16 16" preserveAspectRatio="none"><path d="M4.9 8.2 L7 10.1 L11 5.9" fill="none" stroke="#fff" stroke-width="1.7" stroke-linecap="round" stroke-linejoin="round"/></svg>
<div class="a" style="left:1103.9px;top:436.2px;width:90.3px;height:34px;border:1.8px solid #e8141e;box-sizing:border-box;"></div>
<div class="a" style="left:1278px;top:560px;width:2.5px;height:2.5px;background:#e3101c;"></div>
</body></html>
